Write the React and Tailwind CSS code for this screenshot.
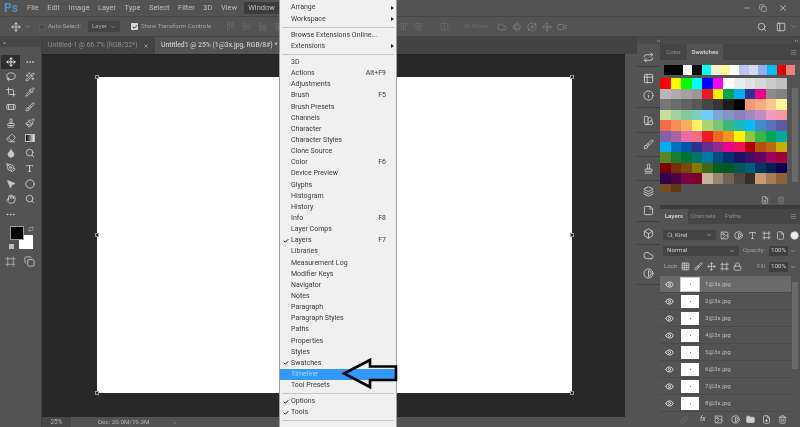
import React from "react";
import {
  Move, Lasso, WandSparkles, Crop, Pipette, Bandage, Brush, Stamp, Paintbrush, Eraser, Droplet, Search,
  PenTool, MousePointer2, Hand, Ellipsis, Repeat, ChevronDown, Check, Minus, X, Copy, Eye, Image, Contrast,
  Type, Lock, Link, Trash2, Folder, FilePlus, Info, Box, Layers, PanelLeft, Menu, Cloud, Rotate3d,
  Grid3x3, Frame, File, AlignStartHorizontal, AlignCenterHorizontal, AlignEndHorizontal, AlignCenterVertical,
  Columns2, Video, Orbit, SwatchBook, Table2, StickyNote, Circle
} from "lucide-react";

const menuBar = ["File", "Edit", "Image", "Layer", "Type", "Select", "Filter", "3D", "View"];

const tools = [
  [Move, Ellipsis], [Lasso, WandSparkles], [Crop, Pipette], [Bandage, Brush], [Stamp, Paintbrush],
  [Eraser, "grad"], [Droplet, Search], [PenTool, "T"], [MousePointer2, Circle], [Hand, Search],
];

const group0 = [["Arrange", "", true], ["Workspace", "", true]];
const group1 = [["Browse Extensions Online..."], ["Extensions", "", true]];
const group2 = [
  ["3D"], ["Actions", "Alt+F9"], ["Adjustments"], ["Brush", "F5"], ["Brush Presets"], ["Channels"], ["Character"],
  ["Character Styles"], ["Clone Source"], ["Color", "F6"], ["Device Preview"], ["Glyphs"], ["Histogram"], ["History"],
  ["Info", "F8"], ["Layer Comps"], ["Layers", "F7", false, true], ["Libraries"], ["Measurement Log"], ["Modifier Keys"],
  ["Navigator"], ["Notes"], ["Paragraph"], ["Paragraph Styles"], ["Paths"], ["Properties"], ["Styles"],
  ["Swatches", "", false, true], ["Timeline", "", false, false, true], ["Tool Presets"],
];
const group3 = [["Options", "", false, true], ["Tools", "", false, true]];

const topSwatches = ["#000000", "#000000", "#ffffff", "#030a0f", "#00ffff", "#f7f3d0", "#fdf9a0", "#ffffff", "#c0c4f0", "#d5d8f5", "#94aef0", "#00bff3", "#e00000", "#f08080"];
const swatches = [
  "#ff0000", "#ffff00", "#00ff00", "#00ffff", "#0000ff", "#ff00ff", "#ffffff", "#ebebeb", "#e1e1e1", "#d7d7d7", "#cbcbcb", "#c0c0c0",
  "#b7b7b7", "#acacac", "#a1a1a1", "#989898", "#ed1c24", "#fff200", "#00a651", "#00aeef", "#2e3192", "#ec008c", "#8c8c8c", "#828282",
  "#777777", "#6c6c6c", "#626262", "#585858", "#464646", "#363636", "#1c1c1c", "#000000", "#f7977a", "#fdad7d", "#fdc68a", "#fff79a",
  "#c4df9b", "#a2d39c", "#82ca9d", "#7bcdc8", "#6ecff6", "#7ea7d8", "#8493ca", "#8882be", "#a187be", "#bc8dbf", "#f49ac2", "#f6989d",
  "#f26c4f", "#f68e55", "#fbaf5c", "#fff467", "#acd372", "#7cc576", "#3bb878", "#1abbb4", "#00bff3", "#438cca", "#5574b9", "#5c5ba7",
  "#855fa8", "#a763a8", "#ee6aa7", "#f26d7d", "#ed1c24", "#f26522", "#f7941d", "#fff200", "#8dc63f", "#39b54a", "#00a651", "#00a99d",
  "#00aeef", "#0072bc", "#0054a6", "#2e3192", "#662d91", "#92278f", "#ec008c", "#ed145b", "#aa0000", "#b5500f", "#b56a10", "#bfb000",
  "#598527", "#1a7b30", "#007236", "#00746b", "#0076a3", "#004b80", "#003471", "#1b1464", "#440e62", "#630460", "#9e005d", "#9e0039",
  "#790000", "#7b2e00", "#7d4900", "#827b00", "#406618", "#005e20", "#005826", "#005952", "#005b7f", "#003663", "#002157", "#0d004c",
  "#32004b", "#4b0049", "#7b0046", "#7a0026", "#c7b299", "#998675", "#736357", "#534741", "#362f2d", "#c69c6d", "#a67c52", "#8c6239",
  "#754c24", "#603913",
];
const layers = ["1@3x.jpg", "2@3x.jpg", "3@3x.jpg", "4@3x.jpg", "5@3x.jpg", "6@3x.jpg", "7@3x.jpg", "8@3x.jpg"];

const dock = [
  ["h-[23px] pt-[4px]", [Repeat]],
  ["h-[41px]", [Table2, Info]],
  ["h-[25px]", [SwatchBook]],
  ["h-[24px]", [Brush]],
  ["h-[24px]", [Stamp]],
  ["h-[41px] gap-[2px]", [Layers, StickyNote]],
  ["h-[23px]", [Box]],
  ["h-[40px] gap-[1px]", [Cloud, Contrast]],
];

function MenuItem({ label, hint, sub, check, active }) {
  return (
    <div className={`flex h-[11.15px] items-center pl-[11px] pr-[10px] ${active ? "bg-[#3399ff] text-[#a8d4ff]" : "text-[#3a3a3a]"}`}>
      <span className="-ml-[8px] mr-[8px] w-0 text-[#111]">{check ? <Check size={6} strokeWidth={4} /> : null}</span>
      <span className="flex-1 whitespace-nowrap">{label}</span>
      {hint ? <span>{hint}</span> : null}
      {sub ? <span className="-mr-[8px] h-0 w-0 border-y-[2.5px] border-l-[3px] border-y-transparent border-l-[#222]" /> : null}
    </div>
  );
}

function Sep() {
  return (
    <div className="flex h-[5px] items-center px-[2px]">
      <div className="h-px w-full bg-[#c4c4c4]" />
    </div>
  );
}

function Handle({ className }) {
  return <div className={`absolute h-[4px] w-[4px] border border-[#9a9a9a] bg-[#2a2a2a] ${className}`} />;
}

function Field({ className, children }) {
  return <div className={`flex items-center bg-[#444444] ${className}`}>{children}</div>;
}

export default function App() {
  return (
    <div className="relative flex h-[427px] w-[800px] flex-col overflow-hidden bg-[#535353] text-[6.2px] leading-none text-[#bdbdbd] blur-[0.4px] [font-family:Roboto,'Liberation_Sans',sans-serif]">
      {/* Menu bar */}
      <div className="flex h-[17px] shrink-0 items-center border-b border-[#474747]">
        <span className="ml-[4px] w-[23px] text-[12px] font-bold text-[#4f8fc0]">Ps</span>
        <div className="flex gap-[8.5px] text-[7.5px]">
          {menuBar.map((m) => <span key={m}>{m}</span>)}
        </div>
        <span className="ml-[7px] w-[35px] bg-[#3c3c3c] px-[4px] py-[2px] text-[7.5px]">Window</span>
        <div className="ml-auto mr-[12px] flex items-center gap-[8px]">
          <Minus size={8} />
          <Copy size={8} />
          <X size={10} className="ml-[3px]" />
        </div>
      </div>

      {/* Options bar */}
      <div className="flex h-[19px] shrink-0 items-center text-[#a5a5a5]">
        <Move size={10} className="ml-[11px] text-[#d8d8d8]" />
        <ChevronDown size={7} className="ml-[3px]" />
        <div className="ml-[8px] h-[6px] w-[6px] border border-[#5e5e5e] bg-[#4a4a4a]" />
        <span className="ml-[3px] w-[36px] whitespace-nowrap">Auto-Select:</span>
        <Field className="ml-[4px] h-[11px] w-[32px] justify-between px-[4px]">Layer <ChevronDown size={6} /></Field>
        <div className="ml-[11px] flex h-[7px] w-[7px] items-center justify-center rounded-[1px] bg-[#d8d8d8] text-[#333]"><Check size={6} strokeWidth={4} /></div>
        <span className="ml-[3px] w-[70px] whitespace-nowrap">Show Transform Controls</span>
        <div className="ml-[15px] flex w-[60px] items-center gap-[7px] text-[#6e6e6e]">
          <AlignStartHorizontal size={9} /><AlignCenterHorizontal size={9} /><AlignEndHorizontal size={9} /><AlignCenterVertical size={9} />
        </div>
        <div className="flex w-[170px] justify-end gap-[6px] pr-[7px] text-[#6e6e6e]">
          <AlignCenterVertical size={9} /><AlignCenterVertical size={9} /><Columns2 size={9} className="ml-[11px]" />
        </div>
        <span className="ml-[7px] w-[25px] whitespace-nowrap text-[#6a6a6a]">3D Mode:</span>
        <div className="ml-[9px] flex items-center gap-[5px] text-[#7d7d7d]">
          <Cloud size={10} /><Rotate3d size={10} /><Orbit size={10} /><Move size={10} /><Video size={10} />
        </div>
        <div className="ml-auto flex items-center text-[#cfcfcf]">
          <Search size={10} />
          <PanelLeft size={10} className="ml-[9px]" />
          <ChevronDown size={7} className="ml-[4px] mr-[3px] text-[#999]" />
        </div>
      </div>

      <div className="flex min-h-0 flex-1 border-t border-[#464646]">
        {/* Tools */}
        <div className="flex w-[42px] shrink-0 flex-col border-r border-[#3f3f3f]">
          <div className="flex h-[10px] items-center bg-[#474747] pl-[3px] text-[6px] text-[#b5b5b5]">«</div>
          <div className="mt-[7px] flex flex-col items-stretch text-[#c9c9c9]">
            {tools.map((row, i) => (
              <div key={i} className="flex h-[15.25px] items-center">
                {row.map((Ic, j) => (
                  <div key={j} className={`flex h-[14px] w-[19px] items-center justify-center ${j === 0 ? "ml-[1px]" : ""} ${i === 0 && j === 0 ? "bg-[#2f2f2f] text-white" : ""}`}>
                    {Ic === "grad" ? (
                      <div className="h-[8px] w-[10px] border border-[#bbbbbb] bg-linear-to-r from-[#111111] to-[#eeeeee]" />
                    ) : Ic === "T" ? (
                      <span className="text-[11px] text-[#dddddd] [font-family:'Liberation_Serif',serif]">T</span>
                    ) : (
                      <Ic size={10} strokeWidth={2.2} fill={Ic === Droplet || Ic === MousePointer2 ? "currentColor" : "none"} />
                    )}
                  </div>
                ))}
              </div>
            ))}
            <div className="flex h-[15.25px] items-center pl-[5px]"><Ellipsis size={11} /></div>
          </div>
          <div className="relative mt-[4px] h-[26px]">
            <div className="absolute left-[10px] top-0 z-10 h-[14px] w-[14px] border border-[#9a9a9a] bg-black" />
            <div className="absolute left-[19px] top-[9px] h-[14px] w-[14px] bg-white" />
            <Repeat size={6} className="absolute left-[28px] top-[0px]" />
            <div className="absolute left-[9px] top-[18px] h-[5px] w-[5px] bg-[#bbbbbb]" />
          </div>
          <div className="mt-[4px] flex items-center pl-[5px]">
            <Frame size={11} className="text-[#aaa]" />
            <Copy size={11} className="ml-[8px] text-[#bbb]" />
          </div>
        </div>

        {/* Document column */}
        <div className="flex min-w-0 flex-1 flex-col">
          <div className="flex h-[17px] shrink-0 items-center bg-[#434343] text-[6.8px]">
            <div className="flex h-full w-[113px] items-center justify-between px-[6px] text-[#8f8f8f]">
              <span className="whitespace-nowrap">Untitled-1 @ 66.7% (RGB/32*)</span>
              <X size={6} className="text-[#ccc]" />
            </div>
            <div className="flex h-full w-[150px] items-center bg-[#535353] pl-[6px] font-medium whitespace-nowrap text-[#c8c8c8]">
              Untitled1 @ 25% (1@3x.jpg, RGB/8#) *
            </div>
          </div>
          <div className="flex min-h-0 flex-1">
            <div className="min-w-0 flex-1 border-t border-[#222222] bg-[#282828] pl-[55px] pt-[22px]">
              <div className="relative h-[316px] w-[475px] bg-white">
                <Handle className="-left-[2px] -top-[2px]" />
                <Handle className="-right-[2px] -top-[2px]" />
                <Handle className="-left-[2px] top-[156px]" />
                <Handle className="-right-[2px] top-[156px]" />
                <Handle className="-bottom-[2px] -left-[2px]" />
                <Handle className="-bottom-[2px] -right-[2px]" />
              </div>
            </div>
            <div className="w-[12px] shrink-0 bg-[#535353]" />
          </div>
          <div className="flex h-[10px] shrink-0 items-center text-[#b5b5b5]">
            <div className="flex h-full w-[29px] items-center justify-center bg-[#474747] text-[6.5px]">25%</div>
            <span className="ml-[27px] w-[48px] whitespace-nowrap">Doc: 20.0M/19.3M</span>
            <span className="ml-[28px]">›</span>
          </div>
        </div>

        {/* Dock */}
        <div className="flex w-[23px] shrink-0 flex-col">
          <div className="flex h-[7px] justify-end bg-[#4a4a4a] text-[6px] text-[#b5b5b5]">‹‹</div>
          {dock.map(([h, icons], i) => (
            <div key={i} className={`flex flex-col items-center justify-center border-b border-[#3f3f3f] text-[#cfcfcf] ${h}`}>
              {icons.map((Ic, j) => <Ic key={j} size={11} className={j === 1 ? "mt-[6px]" : ""} />)}
            </div>
          ))}
        </div>

        {/* Panels */}
        <div className="flex w-[140px] shrink-0 flex-col">
          <div className="flex h-[7px] justify-end bg-[#4a4a4a] pr-[2px] text-[6px] text-[#b5b5b5]">››</div>
          <div className="flex h-[16px] items-center bg-[#454545]">
            <div className="flex h-full w-[27px] items-center justify-center text-[#8f8f8f]">Color</div>
            <div className="flex h-full w-[36px] items-center justify-center bg-[#535353] font-bold text-[#cfcfcf]">Swatches</div>
            <Menu size={7} className="ml-auto mr-[3px] text-[#999]" />
          </div>
          <div className="h-[145px]">
            <div className="ml-[4px] mt-[5px] flex">
              {topSwatches.map((c, i) => <div key={i} className="h-[10px] w-[9.4px]" style={{ background: c }} />)}
            </div>
            <div className="mt-[3px] flex">
              <div className="grid h-[114px] w-[127px] grid-cols-12 content-start overflow-hidden">
                {swatches.map((c, i) => <div key={i} className="h-[10.6px]" style={{ background: c }} />)}
              </div>
              <div className="ml-[5px] mt-[10px] h-[94px] w-[6px] bg-[#6a6a6a]" />
            </div>
            <div className="mt-[4px] flex justify-end gap-[8px] pr-[15px] text-[#ccc]">
              <FilePlus size={8} /><Trash2 size={8} className="text-[#888]" />
            </div>
          </div>
          <div className="h-[4px] bg-[#3c3c3c]" />
          <div className="flex h-[15px] items-center bg-[#454545]">
            <div className="flex h-full w-[28px] items-center justify-center bg-[#535353] font-bold text-[#cfcfcf]">Layers</div>
            <div className="flex h-full w-[30px] items-center justify-center text-[#8a8a8a]">Channels</div>
            <div className="flex h-full w-[30px] items-center justify-center text-[#8a8a8a]">Paths</div>
            <Menu size={7} className="ml-auto mr-[3px] text-[#999]" />
          </div>
          <div className="mt-[5px] flex h-[12px] items-center pl-[3px] text-[#cfcfcf]">
            <Field className="h-[10px] w-[53px] justify-between px-[4px]"><span className="flex items-center gap-[2px]"><Search size={6} />Kind</span><ChevronDown size={6} /></Field>
            <div className="ml-[4px] flex items-center gap-[5px]">
              <Image size={9} /><Contrast size={9} /><Type size={9} /><Frame size={9} /><File size={9} /><Circle size={9} fill="#eeeeee" />
            </div>
          </div>
          <div className="mt-[4px] flex h-[11px] items-center pl-[3px]">
            <Field className="h-[10px] w-[76px] justify-between px-[4px] text-[#cfcfcf]">Normal <ChevronDown size={6} /></Field>
            <span className="ml-[4px] w-[22px] text-[#999]">Opacity:</span>
            <div className="ml-[4px] flex h-[10px] w-[19px] items-center justify-center bg-[#3f3f3f] text-[#cfcfcf]">100%</div>
            <ChevronDown size={6} className="ml-[2px]" />
          </div>
          <div className="mt-[5px] flex h-[11px] items-center pl-[4px] text-[#cfcfcf]">
            <span className="w-[16px] text-[#aaa]">Lock:</span>
            <div className="ml-[1px] flex w-[62px] items-center gap-[4px]">
              <Grid3x3 size={9} /><Brush size={9} /><Move size={9} /><Frame size={9} /><Lock size={9} />
            </div>
            <span className="ml-[14px] w-[9px] text-[#999]">Fill:</span>
            <div className="ml-[3px] flex h-[10px] w-[19px] items-center justify-center bg-[#3f3f3f]">100%</div>
            <ChevronDown size={6} className="ml-[2px]" />
          </div>
          <div className="mt-[4px] flex">
            <div className="w-[131px]">
              {layers.map((l, i) => (
                <div key={l} className={`flex h-[17px] items-center border-b border-[#4a4a4a] ${i === 0 ? "bg-[#6a6a6a]" : ""}`}>
                  <Eye size={9} strokeWidth={2.6} className="ml-[5px] text-[#dcdcdc]" />
                  <div className={`ml-[7px] flex h-[13px] w-[18px] items-center justify-center bg-white ${i === 0 ? "outline outline-[#cccccc]" : ""}`}>
                    <div className="h-px w-px bg-[#777]" />
                  </div>
                  <span className="ml-[6px] text-[#bdbdbd]">{l}</span>
                </div>
              ))}
            </div>
            <div className="ml-[1px] mt-[6px] h-[87px] w-[6px] bg-[#6a6a6a]" />
          </div>
          <div className="flex flex-1 items-center pl-[20px] text-[#cfcfcf]">
            <Link size={8} className="text-[#777]" />
            <span className="ml-[12px] text-[7px] italic">fx</span>
            <Image size={9} className="ml-[8px]" />
            <Contrast size={9} className="ml-[8px]" />
            <Folder size={9} fill="currentColor" className="ml-[6px]" />
            <FilePlus size={9} className="ml-[7px]" />
            <Trash2 size={9} className="ml-[7px]" />
          </div>
        </div>
      </div>

      {/* Window menu overlay */}
      <div className="absolute bottom-0 left-[279px] top-0 w-[118px] border-x border-[#a0a0a0] bg-[#f0f0f0] pt-[2.4px] text-[7px]">
        {group0.map(([a, b, c]) => <MenuItem key={a} label={a} hint={b} sub={c} />)}
        <Sep />
        {group1.map(([a, b, c]) => <MenuItem key={a} label={a} hint={b} sub={c} />)}
        <Sep />
        {group2.map(([a, b, c, d, e]) => <MenuItem key={a} label={a} hint={b} sub={c} check={d} active={e} />)}
        <Sep />
        {group3.map(([a, b, c, d]) => <MenuItem key={a} label={a} hint={b} sub={c} check={d} />)}
        <Sep />
      </div>

      {/* Annotation arrow */}
      <svg className="absolute left-[340px] top-[355px] h-[36px] w-[60px]" viewBox="0 0 60 36" fill="none">
        <path d="M4 18.5 L30 5 L30 11.5 L56 11.5 L56 25 L30 25 L30 32 Z" stroke="#000" strokeWidth="2.6" strokeLinejoin="miter" />
      </svg>
    </div>
  );
}
